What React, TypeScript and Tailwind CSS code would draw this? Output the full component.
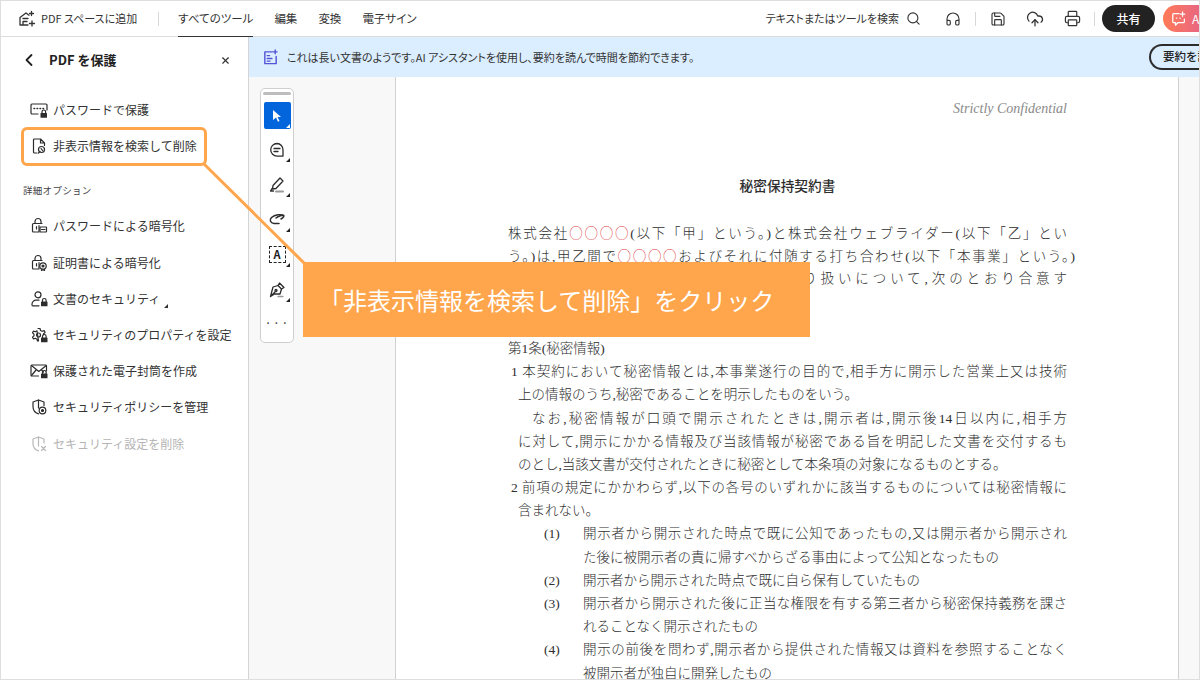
import { ReactNode } from 'react';
import { ChevronLeft, CloudUpload, Headphones, Printer, Save, Search, X } from 'lucide-react';

const ui = "font-['Noto_Sans_CJK_JP','Noto_Sans',sans-serif]";
const mincho = "font-['Liberation_Serif','Noto_Sans_CJK_JP',serif]";

function Icon({ children, gray }: { children: ReactNode; gray?: boolean }) {
  return (
    <svg
      viewBox="0 0 18 18"
      fill="none"
      stroke={gray ? '#b8b8b8' : '#2c2c2c'}
      strokeWidth="1.2"
      strokeLinecap="round"
      strokeLinejoin="round"
      className="w-[18px] h-[18px] shrink-0"
    >
      {children}
    </svg>
  );
}

function Lock({ x = 11, y = 11.5 }: { x?: number; y?: number }) {
  return (
    <g>
      <path d={`M${x + 1.5} ${y}v-1.2a1.8 1.8 0 0 1 3.6 0V${y}`} />
      <rect x={x} y={y} width="6.5" height="4.8" rx=".6" fill="#2c2c2c" stroke="none" />
    </g>
  );
}

const PadlockBody = () => (
  <path d="M9 8.5V15H3.5a1 1 0 0 1-1-1V7.5a1 1 0 0 1 1-1h8.5M5 6.5V4.5a3 3 0 0 1 6 0v2M6.5 9.5v2.5" />
);

const rowIcons: Record<string, ReactNode> = {
  password: (
    <>
      <path d="M8 13H2a1 1 0 0 1-1-1V4a1 1 0 0 1 1-1h14a1 1 0 0 1 1 1v5" />
      <path d="M4 7.5h.6M7 7.5h.6M10 7.5h.6M13 7.5h.6" strokeWidth="1.5" />
      <Lock x={10.5} y={12} />
    </>
  ),
  search: (
    <>
      <path d="M7 16H4.5a1 1 0 0 1-1-1V3a1 1 0 0 1 1-1h6l4 4v2.5M10.5 2v4h4" />
      <circle cx="11.5" cy="12.5" r="3" />
      <path d="M10 14.5l-1.5 1.5M11 11.5l1.5 2" />
    </>
  ),
  encryptPass: (
    <>
      <PadlockBody />
      <rect x="10" y="10" width="6.5" height="5" rx=".5" />
      <path d="M11.5 12.5h3.5" />
    </>
  ),
  encryptCert: (
    <>
      <PadlockBody />
      <circle cx="13" cy="12" r="3.2" />
      <circle cx="13" cy="12" r="1" fill="#2c2c2c" />
      <path d="M11.5 15v1.5l1.5-.7 1.5.7V15" />
    </>
  ),
  user: (
    <>
      <circle cx="8" cy="4.8" r="3" />
      <path d="M9 10.2H6a4 4 0 0 0-4 4V15a.8.8 0 0 0 .8.8H9" />
      <Lock x={11} y={11.5} />
    </>
  ),
  gear: (
    <>
      <path d="M8 2.5h2l.5 2 1.6.8 2-.7 1 1.8-1.5 1.4v1M8.5 15H7.5l-.5-1.8-1.6-.9-1.9.6-1-1.8L4 9.8V8.2L2.500 6.900l1-1.800 1.900.6L7 4.800z" />
      <circle cx="8.500" cy="9" r="2" />
      <Lock x={11} y={11.5} />
    </>
  ),
  mail: (
    <>
      <path d="M8.500 14H2a1 1 0 0 1-1-1V4a1 1 0 0 1 1-1h13.500a1 1 0 0 1 1 1v5" />
      <path d="M1.500 3.500L8.800 9.500l7.500-6M1.500 13.500L6 8M11.500 8l2 2" />
      <Lock x={11} y={11.500} />
    </>
  ),
  policy: (
    <>
      <path d="M8.500 15.800C5 14.800 3 12 3 8.500V4l5.500-2L14 4v3.500" />
      <path d="M8.500 2v8" />
      <circle cx="12.500" cy="12.500" r="3.300" />
      <circle cx="12.500" cy="12.500" r="1" fill="#2c2c2c" />
    </>
  ),
  remove: (
    <>
      <path d="M8.500 15.800C5 14.800 3 12 3 8.500V4l5.500-2L14 4v4" />
      <path d="M8.500 2v9M11.500 11.500l4 4M15.500 11.500l-4 4" />
    </>
  ),
};

function Row({ icon, label, gray, caret }: { icon: string; label: string; gray?: boolean; caret?: boolean }) {
  return (
    <div className={`h-[36.2px] flex items-center pl-[29px] gap-[5px] text-[12px] ${gray ? 'text-[#b4b4b4]' : 'text-[#333]'}`}>
      <Icon gray={gray}>{rowIcons[icon]}</Icon>
      <span className="whitespace-nowrap">{label}</span>
      {caret && <span className="w-0 h-0 self-end mb-[9px] -ml-[1px] border-l-[4px] border-l-transparent border-b-[4px] border-b-[#333]" />}
    </div>
  );
}

function Tool({ children, active }: { children: ReactNode; active?: boolean }) {
  return (
    <div className={`relative flex items-center justify-center w-[27px] h-[27px] rounded-[2px] ${active ? 'bg-[#0265dc]' : ''}`}>
      {children}
      <span className={`absolute right-[1px] bottom-[1px] w-0 h-0 border-l-[4px] border-l-transparent border-b-[4px] ${active ? 'border-b-white' : 'border-b-[#222]'}`} />
    </div>
  );
}

function ToolIcon({ children }: { children: ReactNode }) {
  return (
    <svg viewBox="0 0 18 18" fill="none" stroke="#2c2c2c" strokeWidth="1.3" strokeLinecap="round" strokeLinejoin="round" className="w-[18px] h-[18px]">
      {children}
    </svg>
  );
}

function Line({ children, className = '' }: { children: ReactNode; className?: string }) {
  return <div className={`h-[23.2px] leading-[23.2px] whitespace-nowrap ${className}`}>{children}</div>;
}

const just = 'text-justify [text-align-last:justify]';

function Item({ n, children, justify }: { n?: string; children: ReactNode; justify?: boolean }) {
  return (
    <div className="flex h-[23.2px] leading-[23.2px] whitespace-nowrap pl-[33px]">
      <span className="w-[42px] shrink-0 pl-[3px]">{n}</span>
      <span className={`flex-1 ${justify ? just : ''}`}>{children}</span>
    </div>
  );
}

const Maru = () => <span className="text-[#e0383e] font-['Noto_Sans_CJK_JP',sans-serif]">○○○○</span>;

export default function App() {
  return (
    <div className={`relative w-[1200px] h-[680px] overflow-hidden bg-white border border-[#dedede] flex flex-col ${ui}`}>
      {/* top bar */}
      <header className="h-[36px] shrink-0 flex items-center border-b border-[#dcdcdc] text-[#333] [font-feature-settings:'palt']">
        <svg viewBox="0 0 18 18" fill="none" stroke="#333" strokeWidth="1.3" strokeLinejoin="round" strokeLinecap="round" className="ml-[17px] w-[18px] h-[18px]">
          <path d="M2 15V7.500L8 3l3 2.200M2 15h8M5 15v-3.500h4M5 8.500h5" />
          <path d="M13.500 1.500v4M11.500 3.500h4M14 11v5M11.500 13.500h5" />
        </svg>
        <span className="ml-[5px] text-[11px] whitespace-nowrap">PDF スペースに追加</span>
        <span className="ml-[21px] w-px h-[14px] bg-[#d8d8d8]" />
        <div className="ml-[19px] h-full flex items-center relative text-[11.500px] whitespace-nowrap">
          すべてのツール
          <span className="absolute left-0 right-0 bottom-[-1px] h-[1.500px] bg-[#333]" />
        </div>
        <span className="ml-[21px] text-[11.500px] whitespace-nowrap">編集</span>
        <span className="ml-[21px] text-[11.500px] whitespace-nowrap">変換</span>
        <span className="ml-[21px] text-[11.500px] whitespace-nowrap">電子サイン</span>
        <div className="flex-1" />
        <span className="text-[11px] whitespace-nowrap">テキストまたはツールを検索</span>
        <Search size={15} strokeWidth={1.8} className="ml-[7px]" />
        <Headphones size={16} strokeWidth={1.7} className="ml-[24px]" />
        <span className="ml-[14px] w-px h-[14px] bg-[#d8d8d8]" />
        <Save size={16} strokeWidth={1.7} className="ml-[14px]" />
        <CloudUpload size={18} strokeWidth={1.7} className="ml-[20px]" />
        <Printer size={17} strokeWidth={1.7} className="ml-[20px]" />
        <span className="ml-[13px] w-px h-[14px] bg-[#d8d8d8]" />
        <button className="ml-[7px] w-[53px] h-[27px] rounded-full bg-[#222] text-white text-[12px] font-medium">共有</button>
        <div className="ml-[8px] w-[36px] h-[27px] rounded-l-full bg-gradient-to-r from-[#ff7a55] to-[#e9677f] flex items-center pl-[8px] overflow-hidden">
          <svg viewBox="0 0 18 18" fill="none" stroke="#fff" strokeWidth="1.400" strokeLinejoin="round" strokeLinecap="round" className="w-[16px] h-[16px] shrink-0">
            <path d="M9 3H3a1 1 0 0 0-1 1v8a1 1 0 0 0 1 1h2v3l3-3h6a1 1 0 0 0 1-1V9" />
            <path d="M13 1v5M10.500 3.500h5M6 8h.5M10 8h.5" />
          </svg>
          <span className="ml-[5px] text-white text-[12px]">AI</span>
        </div>
      </header>

      <div className="flex-1 flex min-h-0">
        {/* left panel */}
        <aside className="w-[248px] shrink-0 border-r border-[#d4d4d4] bg-white">
          <div className="h-[46px] flex items-center pl-[18px] pr-[17px]">
            <ChevronLeft size={20} strokeWidth={2.200} className="text-[#222]" />
            <span className="ml-[10px] text-[13px] font-bold text-[#222] whitespace-nowrap">PDF を保護</span>
            <X size={11} strokeWidth={2.500} className="ml-auto text-[#333]" />
          </div>
          <div className="mt-[9px]">
            <Row icon="password" label="パスワードで保護" />
            <Row icon="search" label="非表示情報を検索して削除" />
          </div>
          <div className="mt-[17px] mb-[9px] h-[18px] pl-[22px] flex items-center text-[9.500px] text-[#444] tracking-[0.3px]">詳細オプション</div>
          <Row icon="encryptPass" label="パスワードによる暗号化" />
          <Row icon="encryptCert" label="証明書による暗号化" />
          <Row icon="user" label="文書のセキュリティ" caret />
          <Row icon="gear" label="セキュリティのプロパティを設定" />
          <Row icon="mail" label="保護された電子封筒を作成" />
          <Row icon="policy" label="セキュリティポリシーを管理" />
          <Row icon="remove" label="セキュリティ設定を削除" gray />
        </aside>

        <main className="flex-1 flex flex-col min-w-0">
          {/* assistant banner */}
          <div className="h-[40px] shrink-0 bg-[#dbeeff] flex items-center text-[#333]">
            <svg viewBox="0 0 18 18" fill="none" stroke="#5454d6" strokeWidth="1.500" strokeLinecap="round" strokeLinejoin="round" className="ml-[13px] w-[17px] h-[17px]">
              <path d="M11 3H3v12.500h12V8" />
              <path d="M5.500 7h2.500M5.500 10h5M5.500 12.800h3" />
              <path d="M14 1v4M12 3h4" />
            </svg>
            <span className="ml-[8px] text-[11px] whitespace-nowrap [font-feature-settings:'palt']">これは長い文書のようです。AI アシスタントを使用し、要約を読んで時間を節約できます。</span>
            <div className="ml-auto w-[50px] h-[26px] rounded-l-full border-2 border-r-0 border-[#2c2c2c] pl-[12px] flex items-center overflow-hidden text-[11.500px] font-medium whitespace-nowrap text-[#222]">要約を読む</div>
          </div>

          <div className="flex-1 flex min-h-0 bg-[#f8f8f8]">
            {/* quick tools */}
            <div className="w-[146px] shrink-0 pl-[11px] pt-[11px]">
              <div className="w-[34px] h-[255px] bg-white border border-[#cfcfcf] rounded-[5px] flex flex-col items-center pt-[3px]">
                <span className="w-[28px] h-[3px] rounded-full bg-[#bdbdbd]" />
                <div className="mt-[7px]">
                  <Tool active>
                    <svg viewBox="0 0 14 14" className="w-[14px] h-[14px]"><path d="M3 1l8 7H7.500l2 4-1.500.7-2-4.200L3 11z" fill="#fff" /></svg>
                  </Tool>
                </div>
                <div className="mt-[7px] flex flex-col gap-[8px]">
                  <Tool>
                    <ToolIcon>
                      <path d="M9 2.500a6.300 6.300 0 1 0 0 12.600h6V9A6.200 6.200 0 0 0 9 2.500z" />
                      <path d="M6 7.500h6M6 10.500h4" />
                    </ToolIcon>
                  </Tool>
                  <Tool>
                    <ToolIcon>
                      <path d="M12 2l3 3-7 7.500-3.500.5.500-3.500zM4 12.500L2.500 15h3" />
                      <path d="M8 15.500h7" stroke="#9a9a9a" strokeWidth="2" />
                    </ToolIcon>
                  </Tool>
                  <Tool>
                    <ToolIcon>
                      <path d="M15.500 4.500C13 3 7 3.500 3.500 6.500 1 9 2.500 12 6 12.500h5" strokeWidth="1.500" />
                      <path d="M8 7c2.500-2 6.500-3 7.500-2.500S15 7 13 8" strokeWidth="1.500" />
                    </ToolIcon>
                  </Tool>
                  <Tool>
                    <div className={`w-[17px] h-[17px] border-[1.500px] border-dashed border-[#222] flex items-center justify-center text-[11px] font-bold leading-none text-[#222] ${ui}`}>A</div>
                  </Tool>
                  <Tool>
                    <ToolIcon>
                      <path d="M5 6l5-1.500 3.500 3.500L12 13H6.500L2.500 15.500zM2.500 15.500l4.500-4.500" />
                      <path d="M10 4.500L11.500 2l4.500 4.500-2.500 1.500" />
                      <circle cx="8" cy="9.500" r="1" />
                      <path d="M10 15.500h5" stroke="#9a9a9a" />
                    </ToolIcon>
                  </Tool>
                  <div className="h-[27px] flex items-center justify-center text-[#333] text-[13px] leading-none tracking-[1px] -mt-[2px]">···</div>
                </div>
              </div>
            </div>

            {/* document page */}
            <div className={`w-[784px] shrink-0 bg-white border-x border-[#d0d0d0] pl-[112px] text-[13.500px] text-[#2e2e2e] font-light overflow-hidden ${mincho}`}>
              <div className="w-[559px]">
                <div className="pt-[24px] h-[40px] leading-[16px] text-right italic text-[14px] text-[#8a8a8a] font-normal">Strictly Confidential</div>
                <div className="mt-[58px] h-[23px] leading-[23px] text-center font-medium text-[13.700px]">秘密保持契約書</div>
                <div className="mt-[23px]">
                  <Line className={just}>株式会社<Maru />(以下「甲」という。)と株式会社ウェブライダー(以下「乙」とい</Line>
                  <Line className={`w-[567px] ${just}`}>う。)は,甲乙間で<Maru />およびそれに付随する打ち合わせ(以下「本事業」という。)</Line>
                  <Line className={just}>に関して相互に開示する秘密情報の取り扱いについて,次のとおり合意す</Line>
                  <Line>る。</Line>
                  <Line>&nbsp;</Line>
                  <Line>第1条(秘密情報)</Line>
                  <Line className={`pl-[3px] ${just}`}>1 本契約において秘密情報とは,本事業遂行の目的で,相手方に開示した営業上又は技術</Line>
                  <Line className="pl-[10px]">上の情報のうち,秘密であることを明示したものをいう。</Line>
                  <Line className={`pl-[24px] ${just}`}>なお,秘密情報が口頭で開示されたときは,開示者は,開示後14日以内に,相手方</Line>
                  <Line className={`pl-[10px] ${just}`}>に対して,開示にかかる情報及び当該情報が秘密である旨を明記した文書を交付するも</Line>
                  <Line className="pl-[10px]">のとし,当該文書が交付されたときに秘密として本条項の対象になるものとする。</Line>
                  <Line className={`pl-[3px] ${just}`}>2 前項の規定にかかわらず,以下の各号のいずれかに該当するものについては秘密情報に</Line>
                  <Line className="pl-[10px]">含まれない。</Line>
                  <Item n="(1)" justify>開示者から開示された時点で既に公知であったもの,又は開示者から開示され</Item>
                  <Item>た後に被開示者の責に帰すべからざる事由によって公知となったもの</Item>
                  <Item n="(2)">開示者から開示された時点で既に自ら保有していたもの</Item>
                  <Item n="(3)" justify>開示者から開示された後に正当な権限を有する第三者から秘密保持義務を課さ</Item>
                  <Item>れることなく開示されたもの</Item>
                  <Item n="(4)" justify>開示の前後を問わず,開示者から提供された情報又は資料を参照することなく</Item>
                  <Item>被開示者が独自に開発したもの</Item>
                </div>
              </div>
            </div>
            <div className="flex-1" />
          </div>
        </main>
      </div>

      {/* annotation over the screen */}
      <div className="absolute left-[20px] top-[126px] w-[186px] h-[39px] rounded-[6px] border-[3px] border-[#ffa64d]" />
      <svg viewBox="0 0 1200 680" className="absolute left-[-1px] top-[-1px] w-[1200px] h-[680px] pointer-events-none" fill="none">
        <path d="M204 164L304 263" stroke="#ffa64d" strokeWidth="3" />
      </svg>
      <div className="absolute left-[302px] top-[261px] w-[507px] h-[75px] bg-[#ffa64d] text-white text-[24px] flex items-center pl-[16px] whitespace-nowrap [font-feature-settings:'pkna']">
        「非表示情報を検索して削除」をクリック
      </div>
    </div>
  );
}
